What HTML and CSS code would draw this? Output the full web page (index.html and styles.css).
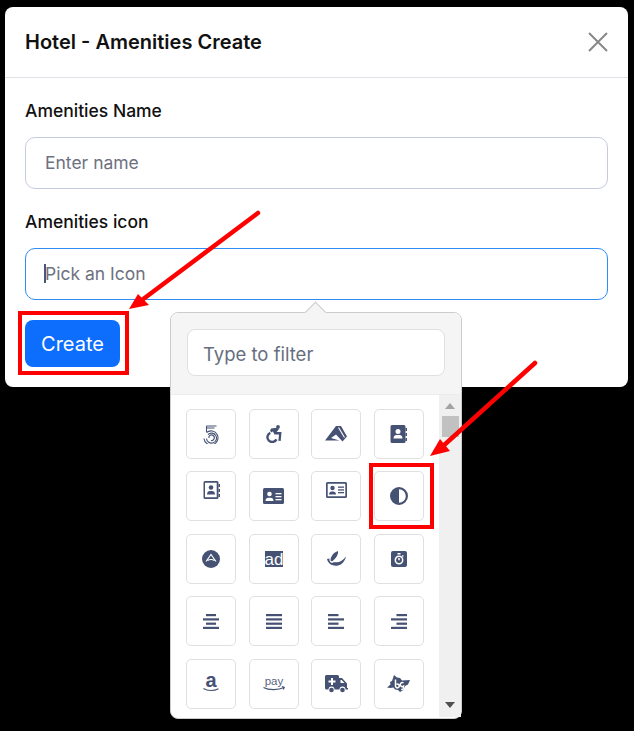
FILE: index.html
```html
<!DOCTYPE html>
<html lang="en">
<head>
  <meta charset="UTF-8" />
  <meta name="viewport" content="width=device-width, initial-scale=1.0"/>
  <title>Hotel - Amenities Create</title>
  <link rel="stylesheet" href="styles.css">
</head>
<body>
  <div class="modal">
    <div class="modal-header">
      <h2>Hotel - Amenities Create</h2>
      <svg class="close" viewBox="0 0 20 20"><path d="M1 1l18 18M19 1L1 19"/></svg>
    </div>
    <div class="modal-body">
      <label class="field-label">Amenities Name</label>
      <div class="field">Enter name</div>
      <label class="field-label">Amenities icon</label>
      <div class="field field-focus"><span class="caret"></span>Pick an Icon</div>
      <button class="btn-create">Create</button>
    </div>
  </div>

  <div class="picker">
    <div class="picker-arrow"></div>
    <div class="picker-head">
      <div class="picker-filter">Type to filter</div>
    </div>
    <div class="picker-body">
      <div class="icon-grid">
        <div class="tile"><svg class="ico ico-line" width="16" height="19" viewBox="0 0 16 19"><path d="M3.500 1h10M3.500 3h8M3.500 1v6"/><path d="M3.500 7.500a7 7 0 1 1-2.500 6"/><path d="M5 9.500a5 5 0 1 1-1.500 4"/><path d="M6 13V11.500a2.800 2.800 0 1 1 2 4"/></svg></div>
        <div class="tile"><svg class="ico" width="16" height="18" viewBox="0 0 16 18"><circle cx="12" cy="1.900" r="1.900"/><path d="M5 3.500l6-.7 2 1.300-2.300 3h4.800l-.8 8.900-2.300-.2.600-6.400H8.500L6.800 6.200l-1 1.200L4 6z"/><path class="ico-open ico-thick" d="M4.300 7.800a4.800 4.800 0 1 0 6.200 6.600"/></svg></div>
        <div class="tile"><svg class="ico" width="23" height="16" viewBox="0 0 23 16"><path d="M0 14.500L11 0h5l6 10.500-4.500 5L11 8.500 6 12l8.500 2.500z"/><path class="ico-open ico-light ico-hair" d="M13.500 1.500l6 10"/></svg></div>
        <div class="tile"><svg class="ico" width="17" height="18" viewBox="0 0 17 18"><path d="M2 0h12a1.500 1.500 0 0 1 1.500 1.500v15A1.500 1.500 0 0 1 14 18H2a1.500 1.500 0 0 1-1.500-1.500v-15A1.500 1.500 0 0 1 2 0z"/><rect x="15.500" y="3" width="1.500" height="3"/><rect x="15.500" y="8" width="1.500" height="3"/><rect x="15.500" y="13" width="1.500" height="3"/><circle class="ico-cut" cx="8" cy="6.500" r="2.500"/><path class="ico-cut" d="M3.500 13.500c0-2.500 1.500-3.500 3-3.500h3c1.500 0 3 1 3 3.500z"/></svg></div>

        <div class="tile tile-up"><svg class="ico" width="17" height="18" viewBox="0 0 17 18"><path fill-rule="evenodd" d="M2 0h12a1.500 1.500 0 0 1 1.500 1.500v15A1.500 1.500 0 0 1 14 18H2a1.500 1.500 0 0 1-1.500-1.500v-15A1.500 1.500 0 0 1 2 0zm0 1.800v14.400h11.700V1.800z"/><rect x="15.500" y="3" width="1.500" height="3"/><rect x="15.500" y="8" width="1.500" height="3"/><rect x="15.500" y="13" width="1.500" height="3"/><circle cx="8" cy="6.500" r="2.300"/><path d="M4 13.500c0-2.500 1.300-3.500 3-3.500h2c1.700 0 3 1 3 3.500z"/></svg></div>
        <div class="tile"><svg class="ico" width="21" height="16" viewBox="0 0 21 16"><rect width="21" height="16" rx="1.500"/><circle class="ico-cut" cx="6.500" cy="6" r="2.300"/><path class="ico-cut" d="M2.500 13c0-2.300 1.300-3.200 3-3.200h2c1.700 0 3 .9 3 3.200z"/><rect class="ico-cut" x="12.500" y="5" width="6" height="1.300"/><rect class="ico-cut" x="12.500" y="8" width="6" height="1.300"/><rect class="ico-cut" x="12.500" y="11" width="6" height="1.300"/></svg></div>
        <div class="tile tile-up"><svg class="ico" width="21" height="16" viewBox="0 0 21 16"><path fill-rule="evenodd" d="M1.500 0h18A1.500 1.500 0 0 1 21 1.500v13a1.500 1.500 0 0 1-1.500 1.500h-18A1.500 1.500 0 0 1 0 14.500v-13A1.500 1.500 0 0 1 1.500 0zm.2 1.700v12.600h17.600V1.700z"/><circle cx="6.500" cy="6" r="2.200"/><path d="M3 12.500c0-2 1.200-3 2.700-3h1.600c1.500 0 2.700 1 2.700 3z"/><rect x="12" y="4.500" width="6" height="1.300"/><rect x="12" y="7.300" width="6" height="1.300"/><rect x="12" y="10" width="6" height="1.300"/></svg></div>
        <div class="tile"><svg class="ico" width="18" height="18" viewBox="0 0 18 18"><path fill-rule="evenodd" d="M9 0a9 9 0 1 1 0 18A9 9 0 0 1 9 0zm0 2.200v13.600a6.800 6.800 0 0 0 0-13.600z"/></svg></div>

        <div class="tile"><svg class="ico" width="18" height="18" viewBox="0 0 18 18"><circle cx="9" cy="9" r="9"/><path class="ico-open ico-light ico-hair" d="M4 11.500L9 4.500l5 7M5.500 10.500c2-1.200 5-1.200 7 0"/></svg></div>
        <div class="tile"><svg class="ico" width="18" height="16" viewBox="0 0 18 16"><rect width="18" height="16"/><text class="ad-text" x="9" y="13.500">ad</text></svg></div>
        <div class="tile"><svg class="ico" width="19" height="15" viewBox="0 0 19 15"><path d="M3.500 9.500C3.500 5.500 6.500 1.500 11 0c.5 3.500-2 7.500-6 10.500z"/><path d="M0 8c1 5 6 7.500 11 6.500 4-.8 7-4.500 8-9-2.500 3.500-5.500 5.500-8.500 5.800-2.500.2-4-.3-5 .7C3.500 12 2 10 2.500 7.500z"/></svg></div>
        <div class="tile"><svg class="ico" width="16" height="16" viewBox="0 0 16 16"><rect width="16" height="16" rx="2"/><circle class="ico-ring" cx="8" cy="9" r="3.700"/><path class="ico-open ico-light" d="M6.500 2.800h3M8 7v2.200M11.300 4.500l1 1"/></svg></div>

        <div class="tile"><svg class="ico" width="16" height="15" viewBox="0 0 16 15"><rect x="3" width="10" height="2.200"/><rect y="4.300" width="16" height="2.200"/><rect x="3" y="8.600" width="10" height="2.200"/><rect y="12.800" width="16" height="2.200"/></svg></div>
        <div class="tile"><svg class="ico" width="16" height="15" viewBox="0 0 16 15"><rect width="16" height="2.200"/><rect y="4.300" width="16" height="2.200"/><rect y="8.600" width="16" height="2.200"/><rect y="12.800" width="16" height="2.200"/></svg></div>
        <div class="tile"><svg class="ico" width="16" height="15" viewBox="0 0 16 15"><rect width="10.500" height="2.200"/><rect y="4.300" width="16" height="2.200"/><rect y="8.600" width="10.500" height="2.200"/><rect y="12.800" width="16" height="2.200"/></svg></div>
        <div class="tile"><svg class="ico" width="16" height="15" viewBox="0 0 16 15"><rect x="5.500" width="10.500" height="2.200"/><rect y="4.300" width="16" height="2.200"/><rect x="5.500" y="8.600" width="10.500" height="2.200"/><rect y="12.800" width="16" height="2.200"/></svg></div>

        <div class="tile"><svg class="ico" width="18" height="28" viewBox="0 0 18 28"><text class="amazon-text" x="9" y="17">a</text><path class="ico-open ico-hair" d="M1.500 18.500c4 2.600 10.500 2.600 15 .2"/></svg></div>
        <div class="tile"><svg class="ico" width="22" height="16" viewBox="0 0 22 16"><text class="pay-text" x="11" y="9">pay</text><path class="ico-open ico-hair" d="M.5 11.500c5 2.800 15 2.800 20.500 0M19 10.500l2.300.8-1 2.200"/></svg></div>
        <div class="tile"><svg class="ico" width="23" height="18" viewBox="0 0 23 18"><path d="M1.500 0h11A1.500 1.500 0 0 1 14 1.500V3h3l5 5.500V13h1v1.500h-2.500a3 3 0 0 0-6 0h-5a3 3 0 0 0-6 0H1.500A1.500 1.500 0 0 1 0 13V1.500A1.500 1.500 0 0 1 1.500 0z"/><circle cx="6.500" cy="15" r="2.300"/><circle cx="17.500" cy="15" r="2.300"/><path class="ico-cut" d="M6 3h2v2.500h2.500v2H8V10H6V7.500H3.500v-2H6zM15.500 5h1.200l2.800 3h-4z"/></svg></div>
        <div class="tile"><svg class="ico" width="23" height="17" viewBox="0 0 23 17"><path d="M7 0l3 2.500 3 .5 2 2.500 8-.5-2 4.500-3 1.500-1.500 4-3.500 2-2-2-3-.5-1.500-2-3 .5L0 12.500l3.500-3L3 7l2-1z"/><path class="ico-open ico-light" d="M8.500 4.500v6.500a1.900 1.900 0 1 0 1-1.700M16.500 8a2 2 0 1 0 0 3.200v2c0 1-1 1.600-2.200 1.100"/></svg></div>
      </div>
      <div class="scrollbar">
        <div class="scroll-up"></div>
        <div class="scroll-thumb"></div>
        <div class="scroll-down"></div>
      </div>
    </div>
  </div>

  <!-- red markup drawn on top of the screenshot -->
  <svg class="markup" width="634" height="731" viewBox="0 0 634 731">
    <rect class="markup-box" x="20" y="313" width="107" height="60"/>
    <rect class="markup-box" x="371" y="465" width="61" height="62"/>
    <path class="markup-line" d="M258 213L142 300"/>
    <path class="markup-head" d="M129 309l9-15 11 11z"/>
    <path class="markup-line" d="M535 363L442 447"/>
    <path class="markup-head" d="M430 456l10-17 10 12z"/>
  </svg>
</body>
</html>
```

FILE: styles.css
```css
body {
  font-family: Inter, "Liberation Sans", sans-serif;
  background-color: #000;
  margin: 0;
  padding: 7px 6px 0 5px;
  height: 731px;
  box-sizing: border-box;
  overflow: hidden;
  position: relative;
}

.modal {
  background-color: #fff;
  border-radius: 8px;
  height: 380px;
}

.modal-header {
  height: 71px;
  box-sizing: border-box;
  padding: 0 20px;
  border-bottom: 1px solid #dee2e6;
  display: flex;
  align-items: center;
  justify-content: space-between;
}

.modal-header h2 {
  margin: 0;
  font-size: 20px;
  font-weight: 600;
  color: #111;
}

.close {
  width: 20px;
  height: 20px;
  fill: none;
  stroke: #888;
  stroke-width: 2;
}

.modal-body {
  padding: 22px 20px 0;
}

.field-label {
  display: block;
  font-size: 17.500px;
  font-weight: 500;
  line-height: 21px;
  color: #111;
  margin-bottom: 16px;
}

.field {
  height: 52px;
  box-sizing: border-box;
  border: 1px solid #c5cbe0;
  border-radius: 10px;
  padding: 0 19px 2px;
  display: flex;
  align-items: center;
  font-size: 17.500px;
  color: #6e7180;
  margin-bottom: 22px;
}

.field-focus {
  border-color: #2e8df5;
  margin-bottom: 20px;
}

.caret {
  width: 2px;
  height: 19px;
  background-color: #4a5578;
  margin-right: -1px;
  margin-left: -1px;
}

.btn-create {
  display: block;
  width: 95px;
  height: 47px;
  border: none;
  border-radius: 8px;
  background-color: #0d6efd;
  color: #fff;
  font-family: inherit;
  font-size: 20px;
  padding: 0;
}

/* icon picker popover */
.picker {
  position: absolute;
  left: 170px;
  top: 312px;
  width: 292px;
  height: 407px;
  box-sizing: border-box;
  border: 1px solid #ccc;
  border-radius: 8px;
  background-color: #fff;
  display: flex;
  flex-direction: column;
}

.picker-arrow {
  position: absolute;
  left: 136px;
  top: -8px;
  width: 17px;
  height: 17px;
  box-sizing: border-box;
  background-color: #f5f5f5;
  border-top: 1px solid #ccc;
  border-left: 1px solid #ccc;
  transform: rotate(45deg);
}

.picker-head {
  position: relative;
  height: 82px;
  box-sizing: border-box;
  padding: 16px 16px 0;
  background-color: #f5f5f5;
  border-bottom: 1px solid #ececec;
  border-radius: 7px 7px 0 0;
}

.picker-filter {
  height: 47px;
  box-sizing: border-box;
  border: 1px solid #e0e0e0;
  border-radius: 8px;
  background-color: #fff;
  padding: 3px 15px 0;
  display: flex;
  align-items: center;
  font-size: 18.500px;
  color: #666e7d;
}

.picker-body {
  flex: 1;
  display: flex;
  min-height: 0;
}

.icon-grid {
  flex: 1;
  display: grid;
  grid-template-columns: repeat(4, 50px);
  grid-auto-rows: 50px;
  column-gap: 12.500px;
  row-gap: 12.400px;
  padding: 14px 0 0 15px;
}

.tile {
  box-sizing: border-box;
  border: 1.500px solid #e0e0e0;
  border-radius: 5px;
  display: flex;
  align-items: center;
  justify-content: center;
}

.tile-up svg {
  margin-bottom: 12px;
}

.ico {
  fill: #465273;
}

.ico-cut {
  fill: #fff;
}

.ico-open {
  fill: none;
  stroke: #465273;
  stroke-width: 2;
}

.ico-thick {
  stroke-width: 2.400;
}

.ico-light {
  stroke: #fff;
  stroke-width: 1.500;
}

.ico-hair {
  stroke-width: 1.100;
}

.ico-line {
  fill: none;
  stroke: #465273;
  stroke-width: 1.100;
}

.ico-ring {
  fill: none;
  stroke: #fff;
  stroke-width: 1.500;
}

.ad-text {
  fill: #fff;
  font-family: "Liberation Sans", sans-serif;
  font-size: 17px;
  text-anchor: middle;
}

.amazon-text {
  fill: #465273;
  font-family: "Liberation Sans", sans-serif;
  font-size: 20px;
  font-weight: 700;
  text-anchor: middle;
}

.pay-text {
  fill: #5a6582;
  font-family: "Liberation Sans", sans-serif;
  font-size: 11.500px;
  text-anchor: middle;
}

.scrollbar {
  width: 22px;
  margin-bottom: 1px;
  background-color: #f0f0f0;
  display: flex;
  flex-direction: column;
  align-items: center;
  position: relative;
}

.scroll-up {
  margin-top: 8px;
  border-left: 5px solid transparent;
  border-right: 5px solid transparent;
  border-bottom: 6px solid #a3a3a3;
}

.scroll-thumb {
  width: 17px;
  height: 21px;
  margin-top: 7px;
  background-color: #c1c1c1;
}

.scroll-down {
  margin-top: auto;
  margin-bottom: 9px;
  border-left: 5px solid transparent;
  border-right: 5px solid transparent;
  border-top: 6px solid #505050;
}

/* annotation layer */
.markup {
  position: absolute;
  left: 0;
  top: 0;
}

.markup-box {
  fill: none;
  stroke: #f00;
  stroke-width: 4;
}

.markup-line {
  fill: none;
  stroke: #f00;
  stroke-width: 4.500;
  stroke-linecap: round;
}

.markup-head {
  fill: #f00;
}
```
